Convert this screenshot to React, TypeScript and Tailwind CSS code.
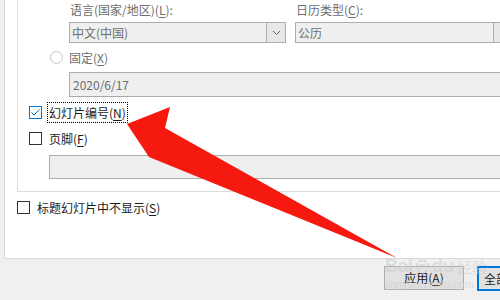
import React from 'react';

const FONT = { fontFamily: '"Microsoft YaHei", "Noto Sans CJK SC", "Noto Sans", sans-serif' };

// label with an underlined access key, e.g. 页脚(F)
const Mnemonic: React.FC<{ text: string; k: string; tail?: string }> = ({ text, k, tail = ')' }) => (
  <span>
    {text}(<span className="underline underline-offset-2">{k}</span>{tail}
  </span>
);

const Chevron = () => (
  <svg width="9" height="6" viewBox="0 0 9 6" className="block">
    <path d="M1 1 L4.5 4.5 L8 1" fill="none" stroke="#606060" strokeWidth="1" />
  </svg>
);

const Dropdown: React.FC<{ value: string; width: string }> = ({ value, width }) => (
  <div className={`flex h-[21px] ${width} shrink-0 border border-[#adadad] bg-[#efefef]`}>
    <div className="flex flex-1 items-center pl-[2px] text-[12px] leading-none text-[#6d6d6d]">{value}</div>
    <div className="flex w-[19px] items-center justify-center border-l border-[#adadad] bg-[#e8e8e8]">
      <Chevron />
    </div>
  </div>
);

const CheckBox: React.FC<{ checked?: boolean }> = ({ checked }) => (
  <div
    className={`flex h-[13px] w-[13px] shrink-0 items-center justify-center border bg-white ${
      checked ? 'border-[#0078d7]' : 'border-[#333333]'
    }`}
  >
    {checked && (
      <svg width="11" height="11" viewBox="0 0 11 11">
        <path d="M1.5 5.5 L4 8 L9.5 2.5" fill="none" stroke="#0078d7" strokeWidth="1" />
      </svg>
    )}
  </div>
);

export default function App() {
  return (
    <div className="relative h-[300px] w-[500px] overflow-hidden bg-[#f0f0f0] select-none" style={FONT}>
      {/* white options panel */}
      <div className="ml-[4px] h-[259px] w-[520px] border-b border-l border-[#d9d9d9] bg-white">
        <div className="ml-[12px] flex h-[192px] w-[520px] flex-col border-b border-l border-[#dcdcdc]">
          {/* labels */}
          <div className="flex h-[20px] items-center text-[12px] text-[#6d6d6d]">
            <div className="ml-[52px] w-[226px]">
              <Mnemonic text="语言(国家/地区)" k="L" tail="):" />
            </div>
            <Mnemonic text="日历类型" k="C" tail="):" />
          </div>
          {/* dropdowns */}
          <div className="mt-[2px] flex gap-[9px] pl-[51px]">
            <Dropdown value="中文(中国)" width="w-[217px]" />
            <Dropdown value="公历" width="w-[218px]" />
          </div>
          {/* fixed date */}
          <div className="mt-[5px] flex h-[19px] items-center pl-[32px] text-[12px] text-[#6d6d6d]">
            <div className="h-[13px] w-[13px] rounded-full border border-[#c6c6c6] bg-white" />
            <span className="ml-[6px]">
              <Mnemonic text="固定" k="X" />
            </span>
          </div>
          <div className="mt-[5px] ml-[51px] flex h-[25px] items-center border-y border-l border-[#adadad] bg-[#efefef] pl-[3px] text-[12px] text-[#6d6d6d]">
            2020/6/17
          </div>
          {/* slide number */}
          <div className="mt-[5px] flex h-[21px] items-center pl-[11px] text-[12px] text-[#1a1a1a]">
            <CheckBox checked />
            <div className="ml-[5px] flex h-[21px] items-center border border-dotted border-black px-[1px]">
              <Mnemonic text="幻灯片编号" k="N" />
            </div>
          </div>
          {/* footer */}
          <div className="mt-[5px] flex h-[21px] items-center pl-[11px] text-[12px] text-[#1a1a1a]">
            <CheckBox />
            <span className="ml-[7px]">
              <Mnemonic text="页脚" k="F" />
            </span>
          </div>
          <div className="mt-[6px] ml-[31px] h-[24px] border-y border-l border-[#adadad] bg-[#efefef]" />
        </div>
        <div className="mt-[5px] flex h-[21px] items-center pl-[12px] text-[12px] text-[#1a1a1a]">
          <CheckBox />
          <span className="ml-[7px]">
            <Mnemonic text="标题幻灯片中不显示" k="S" />
          </span>
        </div>
      </div>

      {/* buttons */}
      <div className="mt-[7px] flex gap-[13px] pl-[384px] text-[12px] text-[#1a1a1a]">
        <div className="flex h-[24px] w-[80px] shrink-0 items-center justify-center border border-[#adadad] bg-[#e1e1e1]">
          <Mnemonic text="应用" k="A" />
        </div>
        <div className="flex h-[25px] w-[80px] shrink-0 items-center border-2 border-[#0078d7] bg-[#e1e1e1] pl-[5px]">
          全部应用
        </div>
      </div>

      {/* watermark */}
      <div className="pointer-events-none absolute left-[385px] top-[257px] flex flex-col text-[#cfcfcf] opacity-60">
        <div className="flex items-center gap-[1px] text-[18px] font-bold leading-none" style={{ fontFamily: '"Liberation Sans", sans-serif' }}>
          <span>Bai</span>
          <svg width="17" height="17" viewBox="0 0 16 16">
            <circle cx="8" cy="10.5" r="4" fill="none" stroke="#cfcfcf" strokeWidth="1.5" />
            <circle cx="3" cy="6" r="1.6" fill="#cfcfcf" />
            <circle cx="6" cy="2.5" r="1.6" fill="#cfcfcf" />
            <circle cx="10" cy="2.5" r="1.6" fill="#cfcfcf" />
            <circle cx="13" cy="6" r="1.6" fill="#cfcfcf" />
          </svg>
          <span>du</span>
          <span className="ml-[2px] text-[15px] font-normal" style={FONT}>经验</span>
        </div>
        <div className="mt-[4px] text-[11px] leading-none" style={{ fontFamily: '"Liberation Sans", sans-serif' }}>
          jingyan.baidu.com
        </div>
      </div>

      {/* red annotation arrow */}
      <svg className="pointer-events-none absolute left-0 top-0" width="500" height="300" viewBox="0 0 500 300">
        <polygon points="127,124 170,107 165,128 397,258 149,157" fill="#f5190f" />
      </svg>
    </div>
  );
}
